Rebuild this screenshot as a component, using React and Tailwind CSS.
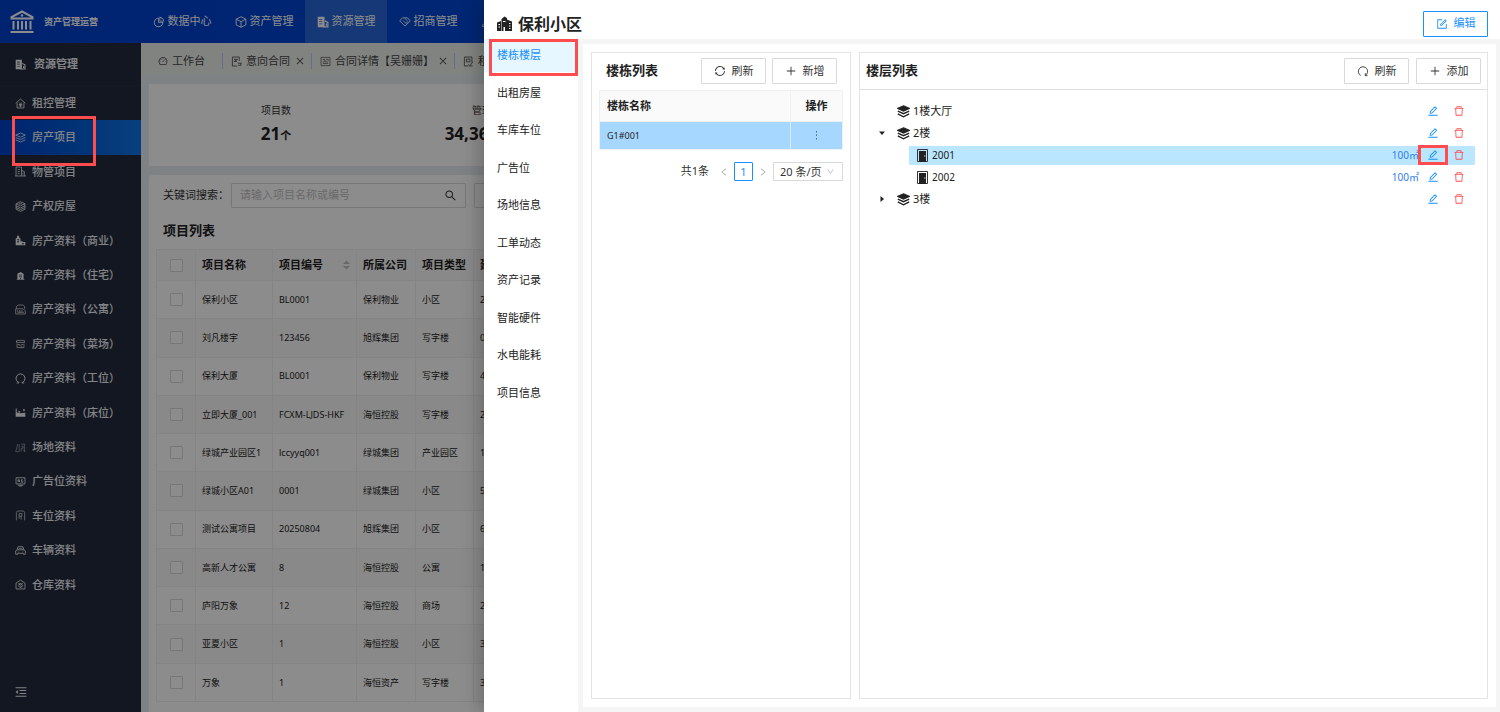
import React, { useState } from 'react';
import {
  AiOutlineDelete,
  AiOutlineEdit,
  AiOutlineForm,
  AiOutlineMenuFold,
  AiOutlinePieChart,
  AiOutlineDashboard,
  AiOutlinePlus,
  AiOutlineSync,
  AiOutlineSearch,
  AiOutlineClose,
  AiOutlineLeft,
  AiOutlineRight,
  AiOutlineDown,
} from 'react-icons/ai';

const icons = {
  building: (
    <>
      <path fillRule="evenodd" fill="currentColor" stroke="none" d="M1 1h9v14H1zM3 4h4v1H3zM3 7h4v1H3zM3 10h4v1H3z" />
      <path d="M10.500 6.500l4 2V14.500H8M12.500 10v3" strokeWidth="1.600" />
    </>
  ),
  buildingLine: <path d="M1.500 14.500V1.500h8v13M4 5h3M4 8h3M4 11h3M9.500 6.500l4 1.500v6.500M0 14.500h16M11.500 10v2" />,
  cube: <path d="M8 1l6.500 3.200v7.600L8 15l-6.500-3.200V4.200zM1.500 4.200L8 7.500l6.500-3.300M8 7.500V15" />,
  tag: <path d="M4.500 2.500h7L15 6.500l-7 7-7-7zM5.500 6l4 4L12 7M8 3l3 3.500" />,
  people: <path d="M8 2a3 3 0 100 6 3 3 0 000-6zM2 14c0-7 12-7 12 0z" />,
  rentHouse: <path d="M1 7.500L8 1.500l7 6M3 7v7.500h10V7M6 6.500l2 2.500 2-2.500M5.500 9.500h5M5.500 11.500h5M8 9v4" />,
  layers: <path d="M8 1.500l7 3-7 3-7-3zM1 8l7 3 7-3M1 11.500l7 3 7-3" />,
  stack: <path d="M8 1l6.500 3L8 7 1.500 4zM1.500 4v8L8 15l6.500-3V4M1.500 7L8 10l6.500-3M1.500 9.500l6.500 3 6.500-3M6 4h4" />,
  shopTower: (
    <path
      fillRule="evenodd"
      fill="currentColor"
      stroke="none"
      d="M1 15V5l2-1V1h3v3l2 1v4h3v1h4v5zM3 6v1.500h3V6zM3 9v1.500h3V9zM10 12v1.500h3V12z"
    />
  ),
  home: (
    <path
      fillRule="evenodd"
      fill="currentColor"
      stroke="none"
      d="M8 3l4.500 2.500v7.500h1v1H2.500v-1h1V5.500zM6 7v1h4V7zM6 9.500v1h4v-1zM7.300 12v1.500h1.400V12z"
    />
  ),
  apartment: <path d="M2 7V3.500L5 1.500h7l2 2V7M1 7h11l3 3v4.500H1zM4 9v3M7 9v3M10 9v3M4 12h9" strokeWidth="1" />,
  market: <path d="M2.500 3.500h11L14 6.500H2zM3 8v6h10V8M4 9.500h3v2M9 9.500h3M9 11v3" strokeWidth="1" />,
  station: <path d="M4 13a6.500 6.500 0 118 0M2.500 14.500h3v-2M13.500 14.500h-3v-2" strokeWidth="1.400" />,
  bed: (
    <path
      fill="currentColor"
      stroke="none"
      d="M1 2h1.500v6l5 1 7.500-.5V14H1zM5 5l3 1.500-1 2-2-1zM12 3h2v3h-2z"
    />
  ),
  site: <path opacity=".55" d="M4 3L1 14h5M6 3v11M9 3h5v11M9 6h3v3H9v5M11 11l4 3" />,
  billboard: <path d="M1.500 2.500h13v9h-13zM4 13.500h8M6 14.500h4M4.500 9V5.500h2V7h-2M7 9L6 7M11.500 5.500h-2V9h2V7.500" />,
  parking: <path opacity=".8" d="M2 15V3.500l1.500-2h9l1.500 2V15M6 13V5h4v4H6M9 9v5" />,
  car: <path d="M3 7l1.500-4.500h7L13 7M1 8.500l2-1.500h10l2 1.500v5h-3v-1.500H4v1.500H1zM4 10h1M11 10h1M5 6c2-1.500 4-1.500 6 0" />,
  store: <path d="M1.500 6L8 1.500 14.500 6v8.500h-13zM4.500 7h7M5 9l3-2 3 3-3 3-3-3M7 9l3 3" />,
  doc: <path d="M9 14.500H2v-13h10V7M4.500 5h5l-5 3h4M14.500 10v3.500h-4M10 10.500h5" />,
  docLine: <path opacity=".8" d="M1.500 2h13v12h-13zM4 5h3v3M9 5h3v2M4 11h8M4 8.500h8" />,
  docCheck: <path d="M2 1.500h11v8M2 1.500v13h6M5 4.500h5v4H5zM8 12l2 2 4-5M9 14.500h5" />,
  redo: <path d="M5 14a6.200 6.200 0 116 0M11 11v3.200h3" />,
};

function Icon({ name, size = 11 }) {
  return (
    <svg width={size} height={size} viewBox="0 0 16 16" fill="none" stroke="currentColor" strokeWidth="1.2" className="shrink-0">
      {icons[name]}
    </svg>
  );
}

const navItems = [
  { label: '数据中心', icon: <AiOutlinePieChart size={12} /> },
  { label: '资产管理', icon: <Icon name="cube" size={12} /> },
  { label: '资源管理', icon: <Icon name="building" size={12} />, active: true },
  { label: '招商管理', icon: <Icon name="tag" size={12} /> },
  { label: '客户管理', icon: <Icon name="people" size={12} /> },
];

const menuItems = [
  ['租控管理', 'rentHouse'],
  ['房产项目', 'layers'],
  ['物管项目', 'buildingLine'],
  ['产权房屋', 'stack'],
  ['房产资料（商业）', 'shopTower'],
  ['房产资料（住宅）', 'home'],
  ['房产资料（公寓）', 'apartment'],
  ['房产资料（菜场）', 'market'],
  ['房产资料（工位）', 'station'],
  ['房产资料（床位）', 'bed'],
  ['场地资料', 'site'],
  ['广告位资料', 'billboard'],
  ['车位资料', 'parking'],
  ['车辆资料', 'car'],
  ['仓库资料', 'store'],
];

const projects = [
  ['保利小区', 'BL0001', '保利物业', '小区', '2000'],
  ['刘凡楼宇', '123456', '旭辉集团', '写字楼', '0'],
  ['保利大厦', 'BL0001', '保利物业', '写字楼', '4000'],
  ['立即大厦_001', 'FCXM-LJDS-HKF', '海恒控股', '写字楼', '2000'],
  ['绿城产业园区1', 'lccyyq001', '绿城集团', '产业园区', '1000'],
  ['绿城小区A01', '0001', '绿城集团', '小区', '5000'],
  ['测试公寓项目', '20250804', '旭辉集团', '小区', '6000'],
  ['高新人才公寓', '8', '海恒控股', '公寓', '1000'],
  ['庐阳万象', '12', '海恒控股', '商场', '2000'],
  ['亚夏小区', '1', '海恒控股', '小区', '3000'],
  ['万象', '1', '海恒资产', '写字楼', '3000'],
];

const drawerTabs = [
  '楼栋楼层', '出租房屋', '车库车位', '广告位', '场地信息',
  '工单动态', '资产记录', '智能硬件', '水电能耗', '项目信息',
];

const floors = [
  { name: '1楼大厅' },
  { name: '2楼', arrow: 'down' },
  { name: '2001', room: true, area: '100㎡', selected: true },
  { name: '2002', room: true, area: '100㎡' },
  { name: '3楼', arrow: 'right' },
];

function Logo() {
  return (
    <svg width="24" height="24" viewBox="0 0 24 24" fill="none" stroke="currentColor" strokeWidth="2">
      <path d="M1.500 8.500V7L12 1.500 22.500 7v1.500z" />
      <circle cx="12" cy="5.500" r="1.200" fill="currentColor" stroke="none" />
      <path d="M3.500 11v8.500M8 11v8.500M12 11v8.500M16 11v8.500M20.500 11v8.500" />
      <path d="M0.500 22h23" />
    </svg>
  );
}

function TopBar() {
  return (
    <header className="flex h-[43px] shrink-0 bg-gradient-to-r from-[#0040cc] to-[#0056e6] text-white">
      <div className="flex w-[141px] shrink-0 items-center gap-[10px] pl-[10px]">
        <Logo />
        <span className="text-[9px] font-bold whitespace-nowrap">资产管理运营</span>
      </div>
      <nav className="flex">
        {navItems.map((item) => (
          <a
            key={item.label}
            href="#"
            className={`flex w-[82px] shrink-0 items-center justify-center gap-[3px] text-[11px] ${item.active ? 'bg-[#2a66d8]' : ''}`}
          >
            {item.icon}
            {item.label}
          </a>
        ))}
      </nav>
    </header>
  );
}

function Sidebar() {
  return (
    <aside className="flex w-[141px] shrink-0 flex-col bg-[#222a3d] text-[#f0f1f5]">
      <h2 className="flex h-[43px] items-center gap-2 border-b border-[#272e40] pl-[15px] text-[11px] font-bold">
        <Icon name="building" size={11} />
        资源管理
      </h2>
      <nav className="grid h-[516px] auto-rows-fr">
        {menuItems.map(([label, icon]) => (
          <a
            key={label}
            href="#"
            className={`flex items-center gap-[6px] pl-[15px] text-[11px] font-medium whitespace-nowrap ${
              label === '房产项目' ? 'bg-gradient-to-r from-[#0040c8] to-[#1274e6]' : ''
            }`}
          >
            <Icon name={icon} size={11} />
            {label}
          </a>
        ))}
      </nav>
      <button type="button" aria-label="收起菜单" className="mt-auto mb-[13px] ml-[14px] w-[14px]">
        <AiOutlineMenuFold size={14} />
      </button>
    </aside>
  );
}

function PageTabs() {
  return (
    <div className="flex h-8 shrink-0 items-center bg-[#ecefec] pt-1 text-[11px] whitespace-nowrap text-[#444]">
      <a href="#" className="flex w-[82px] shrink-0 items-center gap-1 border-r border-[#b4cbf4] pl-[17px]">
        <AiOutlineDashboard size={10} />
        工作台
      </a>
      <a href="#" className="flex shrink-0 items-center gap-1 border-r border-[#b4cbf4] pr-[6px] pl-2">
        <Icon name="doc" />
        意向合同
        <AiOutlineClose size={10} className="ml-[1px]" />
      </a>
      <a href="#" className="flex shrink-0 items-center gap-1 border-r border-[#b4cbf4] pr-[6px] pl-2">
        <Icon name="docLine" />
        合同详情【吴姗姗】
        <AiOutlineClose size={10} />
      </a>
      <a href="#" className="flex shrink-0 items-center gap-1 pl-2">
        <Icon name="docCheck" />
        租赁合同
      </a>
    </div>
  );
}

function Stat({ label, value, unit }) {
  return (
    <div className="w-[224px] shrink-0 text-center text-[#333]">
      <p className="text-[10px] leading-4">{label}</p>
      <p className="mt-1 text-[17px] leading-6 font-bold text-[#222]">
        {value}
        <span className="text-[11px]">{unit}</span>
      </p>
    </div>
  );
}

function ProjectTable() {
  const th = 'h-[31px] border border-[#f0f0f0] px-[6px] text-left text-[11px] font-bold';
  const td = 'border border-[#f0f0f0] px-[6px]';
  return (
    <table className="h-[453px] w-full table-fixed border-collapse bg-white text-[9px] whitespace-nowrap text-[#222]">
      <colgroup>
        <col className="w-[39px]" />
        <col className="w-[77px]" />
        <col className="w-[84px]" />
        <col className="w-[59px]" />
        <col className="w-[58px]" />
        <col />
      </colgroup>
      <thead className="bg-[#fafafa]">
        <tr>
          <th className={th}>
            <input type="checkbox" aria-label="全选" className="mx-auto block size-[13px] appearance-none rounded-[1px] border border-[#d9d9d9] bg-white" />
          </th>
          <th className={th}>项目名称</th>
          <th className={th}>
            <span className="flex items-center justify-between">
              项目编号
              <svg width="7" height="10" viewBox="0 0 7 10" fill="#bfbfbf">
                <path d="M3.500 0.500L7 4H0zM3.500 9.500L0 6h7z" />
              </svg>
            </span>
          </th>
          <th className={th}>所属公司</th>
          <th className={th}>项目类型</th>
          <th className={th}>建筑面积</th>
        </tr>
      </thead>
      <tbody>
        {projects.map((row) => (
          <tr key={row[0]} className="h-[38px] even:bg-[#fafafa]">
            <td className={td}>
              <input
                type="checkbox"
                aria-label={row[0]}
                className="mx-auto block size-[13px] appearance-none rounded-[1px] border border-[#d9d9d9] bg-white"
              />
            </td>
            {row.map((cell, i) => (
              <td key={i} className={td}>{cell}</td>
            ))}
          </tr>
        ))}
      </tbody>
    </table>
  );
}

function ProjectPage() {
  return (
    <main className="flex min-w-0 flex-1 flex-col overflow-hidden bg-[#e8edf3]">
      <PageTabs />
      <section className="mt-[9px] ml-2 flex h-[82px] shrink-0 items-center overflow-hidden bg-white pl-[15px]">
        <Stat label="项目数" value="21" unit="个" />
        <Stat label="管理面积(㎡)" value="34,369.00" unit="平方米" />
      </section>
      <section className="mt-[9px] ml-2 flex-1 rounded-tl bg-white pt-2 pl-[7px]">
        <div className="flex items-center pl-[7px]">
          <label htmlFor="keyword" className="w-[68px] shrink-0 text-[11px] whitespace-nowrap text-[#333]">关键词搜索：</label>
          <div className="flex h-[25px] w-[235px] shrink-0 items-center rounded-[1px] border border-[#d9d9d9] px-2">
            <input
              id="keyword"
              placeholder="请输入项目名称或编号"
              className="min-w-0 flex-1 bg-transparent text-[11px] outline-none placeholder:text-[#bfbfbf]"
            />
            <AiOutlineSearch size={13} color="#333" />
          </div>
          <select aria-label="项目类型" className="ml-2 h-[25px] w-[160px] shrink-0 appearance-none rounded-[1px] border border-[#d9d9d9]" />
        </div>
        <h3 className="flex h-[41px] items-center pt-1 pl-[7px] text-[13px] font-bold text-[#222]">项目列表</h3>
        <ProjectTable />
      </section>
    </main>
  );
}

function Button({ icon, children, primary }) {
  return (
    <button
      type="button"
      className={`flex h-[26px] w-[65px] items-center justify-center gap-[6px] rounded-[1px] border bg-white text-[11px] ${
        primary ? 'border-[#1890ff] text-[#1890ff]' : 'border-[#d9d9d9] text-[#333]'
      }`}
    >
      {icon}
      {children}
    </button>
  );
}

function BuildingPanel() {
  return (
    <section className="w-[260px] shrink-0 border border-[#e4e4e4] px-[7px] pt-[5px]">
      <div className="flex items-center gap-[6px] pr-[6px] pl-[7px]">
        <h3 className="flex-1 text-[13px] font-bold">楼栋列表</h3>
        <Button icon={<AiOutlineSync size={12} />}>刷新</Button>
        <Button icon={<AiOutlinePlus size={12} />}>新增</Button>
      </div>
      <table className="mt-[6px] w-full table-fixed border-collapse border border-[#f0f0f0]">
        <thead>
          <tr className="h-[31px] bg-[#fafafa] text-[11px]">
            <th className="border border-[#f0f0f0] px-[7px] text-left font-bold">楼栋名称</th>
            <th className="w-[52px] border border-[#f0f0f0] font-bold">操作</th>
          </tr>
        </thead>
        <tbody>
          <tr className="h-[28px] bg-[#a6d7ff] text-[9px]">
            <td className="border-r border-[#d9ebfa] px-[7px]">G1#001</td>
            <td>
              <button type="button" aria-label="更多" className="mx-auto block text-[#3b6f9e]">
                <svg width="3" height="9" viewBox="0 0 3 9" fill="currentColor">
                  <path d="M1 0h1v1.500H1zM1 3.500h1V5H1zM1 7h1v1.500H1z" />
                </svg>
              </button>
            </td>
          </tr>
        </tbody>
      </table>
      <div className="mt-3 flex h-[19px] items-center justify-end text-[11px] text-[#333]">
        <span>共1条</span>
        <button type="button" aria-label="上一页" className="ml-[10px] text-[#aaa]"><AiOutlineLeft size={10} /></button>
        <button type="button" className="mx-[5px] h-[19px] w-[19px] rounded-[1px] border border-[#1890ff] leading-4 text-[#1890ff]">1</button>
        <button type="button" aria-label="下一页" className="mr-[5px] text-[#aaa]"><AiOutlineRight size={10} /></button>
        <div className="relative">
          <select aria-label="每页条数" className="block h-[19px] w-[70px] appearance-none rounded-[1px] border border-[#d9d9d9] bg-white pl-[6px] leading-4">
            <option>20 条/页</option>
          </select>
          <AiOutlineDown size={9} className="pointer-events-none absolute top-[5px] right-2 text-[#bfbfbf]" />
        </div>
      </div>
    </section>
  );
}

function FloorIcon() {
  return (
    <svg width="13" height="13" viewBox="0 0 16 16" fill="none" stroke="#222" strokeWidth="1.500" className="shrink-0">
      <path d="M8 1l7 3.200-7 3.300-7-3.300z" fill="#222" />
      <path d="M1 7.500l7 3.200 7-3.200M1 11l7 3.500 7-3.500" strokeWidth="1.800" />
    </svg>
  );
}

function RoomIcon() {
  return (
    <svg width="11" height="13" viewBox="0 0 11 13" fill="none" className="shrink-0">
      <path d="M.5 12.500V.5h10v12z" stroke="#333" />
      <path d="M2 2h7v11H2z" fill="#222" />
      <path d="M7 7h1.500" stroke="#ccc" />
    </svg>
  );
}

function FloorRow({ floor }) {
  return (
    <li className={`flex h-[22px] items-center ${floor.room ? 'pl-[20px]' : ''}`}>
      <span className="flex w-[15px] shrink-0 justify-center">
        {floor.arrow && (
          <svg width="6" height="6" viewBox="0 0 6 6" fill="#222">
            <path d={floor.arrow === 'down' ? 'M0 1.500h6L3 5z' : 'M1.500 0v6L5 3z'} />
          </svg>
        )}
      </span>
      <div className={`flex h-[19px] flex-1 items-center rounded-[1px] pr-[10px] pl-2 ${floor.selected ? 'bg-[#bae7ff]' : ''}`}>
        {floor.room ? <RoomIcon /> : <FloorIcon />}
        <span className={floor.room ? 'ml-1 flex-1 text-[10px]' : 'ml-[3px] flex-1 text-[11px]'}>{floor.name}</span>
        {floor.area && <span className="text-[10px] text-[#2f80ed]">{floor.area}</span>}
        <span className="relative ml-2 flex">
          <button type="button" aria-label={`编辑${floor.name}`} className="text-[#1890ff]"><AiOutlineEdit size={12} /></button>
          {floor.selected && <span className="absolute -inset-x-[9px] -inset-y-[4px] border-[3px] border-[#ff4d4f]" />}
        </span>
        <button type="button" aria-label={`删除${floor.name}`} className="ml-[14px] text-[#ff4d4f]"><AiOutlineDelete size={12} /></button>
      </div>
    </li>
  );
}

function FloorPanel() {
  return (
    <section className="min-w-0 flex-1 border border-[#e4e4e4]">
      <div className="flex h-[37px] items-center gap-[7px] border-b border-[#dedede] px-[6px]">
        <h3 className="flex-1 text-[13px] font-bold">楼层列表</h3>
        <Button icon={<Icon name="redo" size={12} />}>刷新</Button>
        <Button icon={<AiOutlinePlus size={12} />}>添加</Button>
      </div>
      <ul className="pt-[10px] pr-3 pl-[14px]">
        {floors.map((floor) => (
          <FloorRow key={floor.name} floor={floor} />
        ))}
      </ul>
    </section>
  );
}

function Drawer() {
  const [tab, setTab] = useState('楼栋楼层');
  return (
    <div
      role="dialog"
      aria-label="保利小区"
      className="absolute inset-y-0 right-0 left-[484px] flex flex-col bg-white text-[#222] shadow-[-6px_0_16px_rgba(0,0,0,0.2)]"
    >
      <div className="flex h-[39px] shrink-0 items-center gap-[6px] pt-2 pr-3 pl-[13px]">
        <svg width="15" height="15" viewBox="0 0 15 15" fill="#222">
          <path fillRule="evenodd" d="M0 15V6.500l4-1.500v10zM1.500 8v1H3V8zM1.500 10.500v1H3v-1z" />
          <path fillRule="evenodd" d="M4.500 15V3L7.500 .5 10 2v13H8v-4H6.500v4zM6 5v1h2.500V5z" />
          <path fillRule="evenodd" d="M10 15V3.500l5 2V15zM12 7v1h1.500V7zM12 9.500v1h1.500v-1zM12 12v1h1.500v-1z" />
        </svg>
        <h1 className="flex-1 text-[16px] leading-6 font-bold">保利小区</h1>
        <Button primary icon={<AiOutlineForm size={12} />}>编辑</Button>
      </div>
      <div className="flex min-h-0 flex-1">
        <nav className="w-[94px] shrink-0">
          <div className="grid h-[370px] auto-rows-fr gap-[5px]">
            {drawerTabs.map((name) => (
              <button
                key={name}
                type="button"
                onClick={() => setTab(name)}
                className={`pl-[13px] text-left text-[11px] ${tab === name ? 'bg-[#e6f7ff] text-[#1890ff]' : ''}`}
              >
                {name}
              </button>
            ))}
          </div>
        </nav>
        <div className="flex min-w-0 flex-1 bg-[#f5f5f5] py-[5px] pr-1 pl-[5px]">
          <div className="flex min-w-0 flex-1 gap-2 bg-white p-2">
            <BuildingPanel />
            <FloorPanel />
          </div>
        </div>
      </div>
      <span className="pointer-events-none absolute top-[39px] left-[5px] h-[37px] w-[89px] border-[3px] border-[#ff4d4f]" />
    </div>
  );
}

function App() {
  return (
    <div className="relative flex h-screen flex-col overflow-hidden font-['Noto_Sans','Noto_Sans_CJK_SC',sans-serif]">
      <TopBar />
      <div className="flex min-h-0 flex-1">
        <Sidebar />
        <ProjectPage />
      </div>
      <div className="absolute inset-0 bg-black/45" />
      <span className="pointer-events-none absolute top-[116px] left-3 h-[50px] w-[84px] border-[3px] border-[#ff4d4f]" />
      <Drawer />
    </div>
  );
}

export default App;
